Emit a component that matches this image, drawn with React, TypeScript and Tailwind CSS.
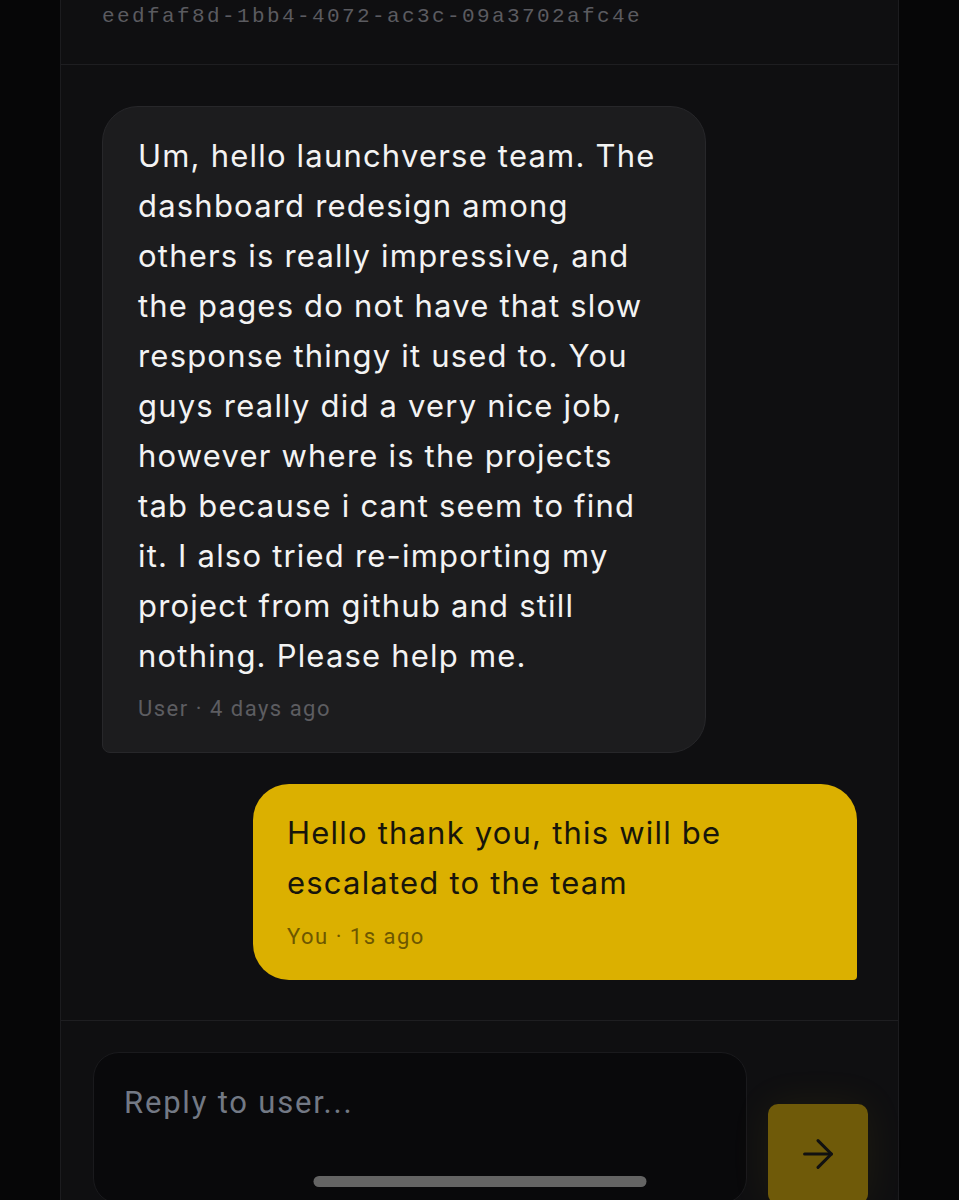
import React from "react";
import { ArrowRight } from "lucide-react";

export default function App() {
  return (
    <div className="relative h-[1200px] overflow-hidden bg-[#060607] flex justify-center" style={{ fontFamily: "Inter, 'Noto Sans', sans-serif" }}>
      <div className="w-[839px] shrink-0 border-x border-[#1c1c1f] bg-[#0f0f11] flex flex-col">
        {/* header */}
        <div className="border-b border-[#1e1e21] px-[41px] pt-[2px] pb-[32px]">
          <div className="text-[21px] leading-[30px] tracking-[2.4px] text-[#5b5b60]" style={{ fontFamily: "'Liberation Mono', monospace" }}>
            eedfaf8d-1bb4-4072-ac3c-09a3702afc4e
          </div>
        </div>

        {/* messages */}
        <div className="flex flex-col gap-[31px] px-[41px] pt-[41px] pb-[40px]">
          <div className="self-start w-[604px] rounded-[36px] rounded-bl-[8px] border border-[#27272a] bg-[#1c1c1e] pl-[35px] pr-[44px] pt-[24px] pb-[30px]">
            <p className="text-[31px] leading-[50px] tracking-[1.2px] text-[#f3f3f3]">
              Um, hello launchverse team. The dashboard redesign among others is really impressive, and the pages do not have that slow response thingy it used to. You guys really did a very nice job, however where is the projects tab because i cant seem to find it. I also tried re-importing my project from github and still nothing. Please help me.
            </p>
            <div className="mt-[15px] text-[22px] leading-[26px] tracking-[1.5px] text-[#5d5d61]" style={{ fontFamily: "Roboto, sans-serif" }}>
              User · 4 days ago
            </div>
          </div>

          <div className="self-end w-[604px] rounded-[36px] rounded-br-[4px] bg-[#dbb000] px-[34px] pt-[24px] pb-[30px]">
            <p className="text-[31px] leading-[50px] tracking-[1.2px] text-[#17150b]">
              Hello thank you, this will be escalated to the team
            </p>
            <div className="mt-[16px] text-[22px] leading-[26px] tracking-[1.5px] text-[#6d5700]" style={{ fontFamily: "Roboto, sans-serif" }}>
              You · 1s ago
            </div>
          </div>
        </div>

        {/* footer */}
        <div className="border-t border-[#1e1e21] flex items-end gap-[21px] pl-[32px] pr-[30px] pt-[31px]">
          <div className="flex-1 h-[152px] rounded-[26px] border border-[#1a1a1d] bg-[#09090b] px-[30px] pt-[30px]">
            <div className="text-[31px] leading-[40px] tracking-[1.8px] text-[#737985]" style={{ fontFamily: "Roboto, sans-serif" }}>
              Reply to user...
            </div>
          </div>
          <div className="w-[100px] h-[100px] shrink-0 rounded-[10px] bg-[#6f5a09] flex items-center justify-center shadow-[0_0_40px_rgba(220,176,0,0.08)]">
            <ArrowRight size={46} strokeWidth={1.6} color="#111" />
          </div>
        </div>
      </div>
      <div className="absolute bottom-[13px] left-1/2 -translate-x-1/2 w-[333px] h-[11px] rounded-full bg-[#646464]" />
    </div>
  );
}
